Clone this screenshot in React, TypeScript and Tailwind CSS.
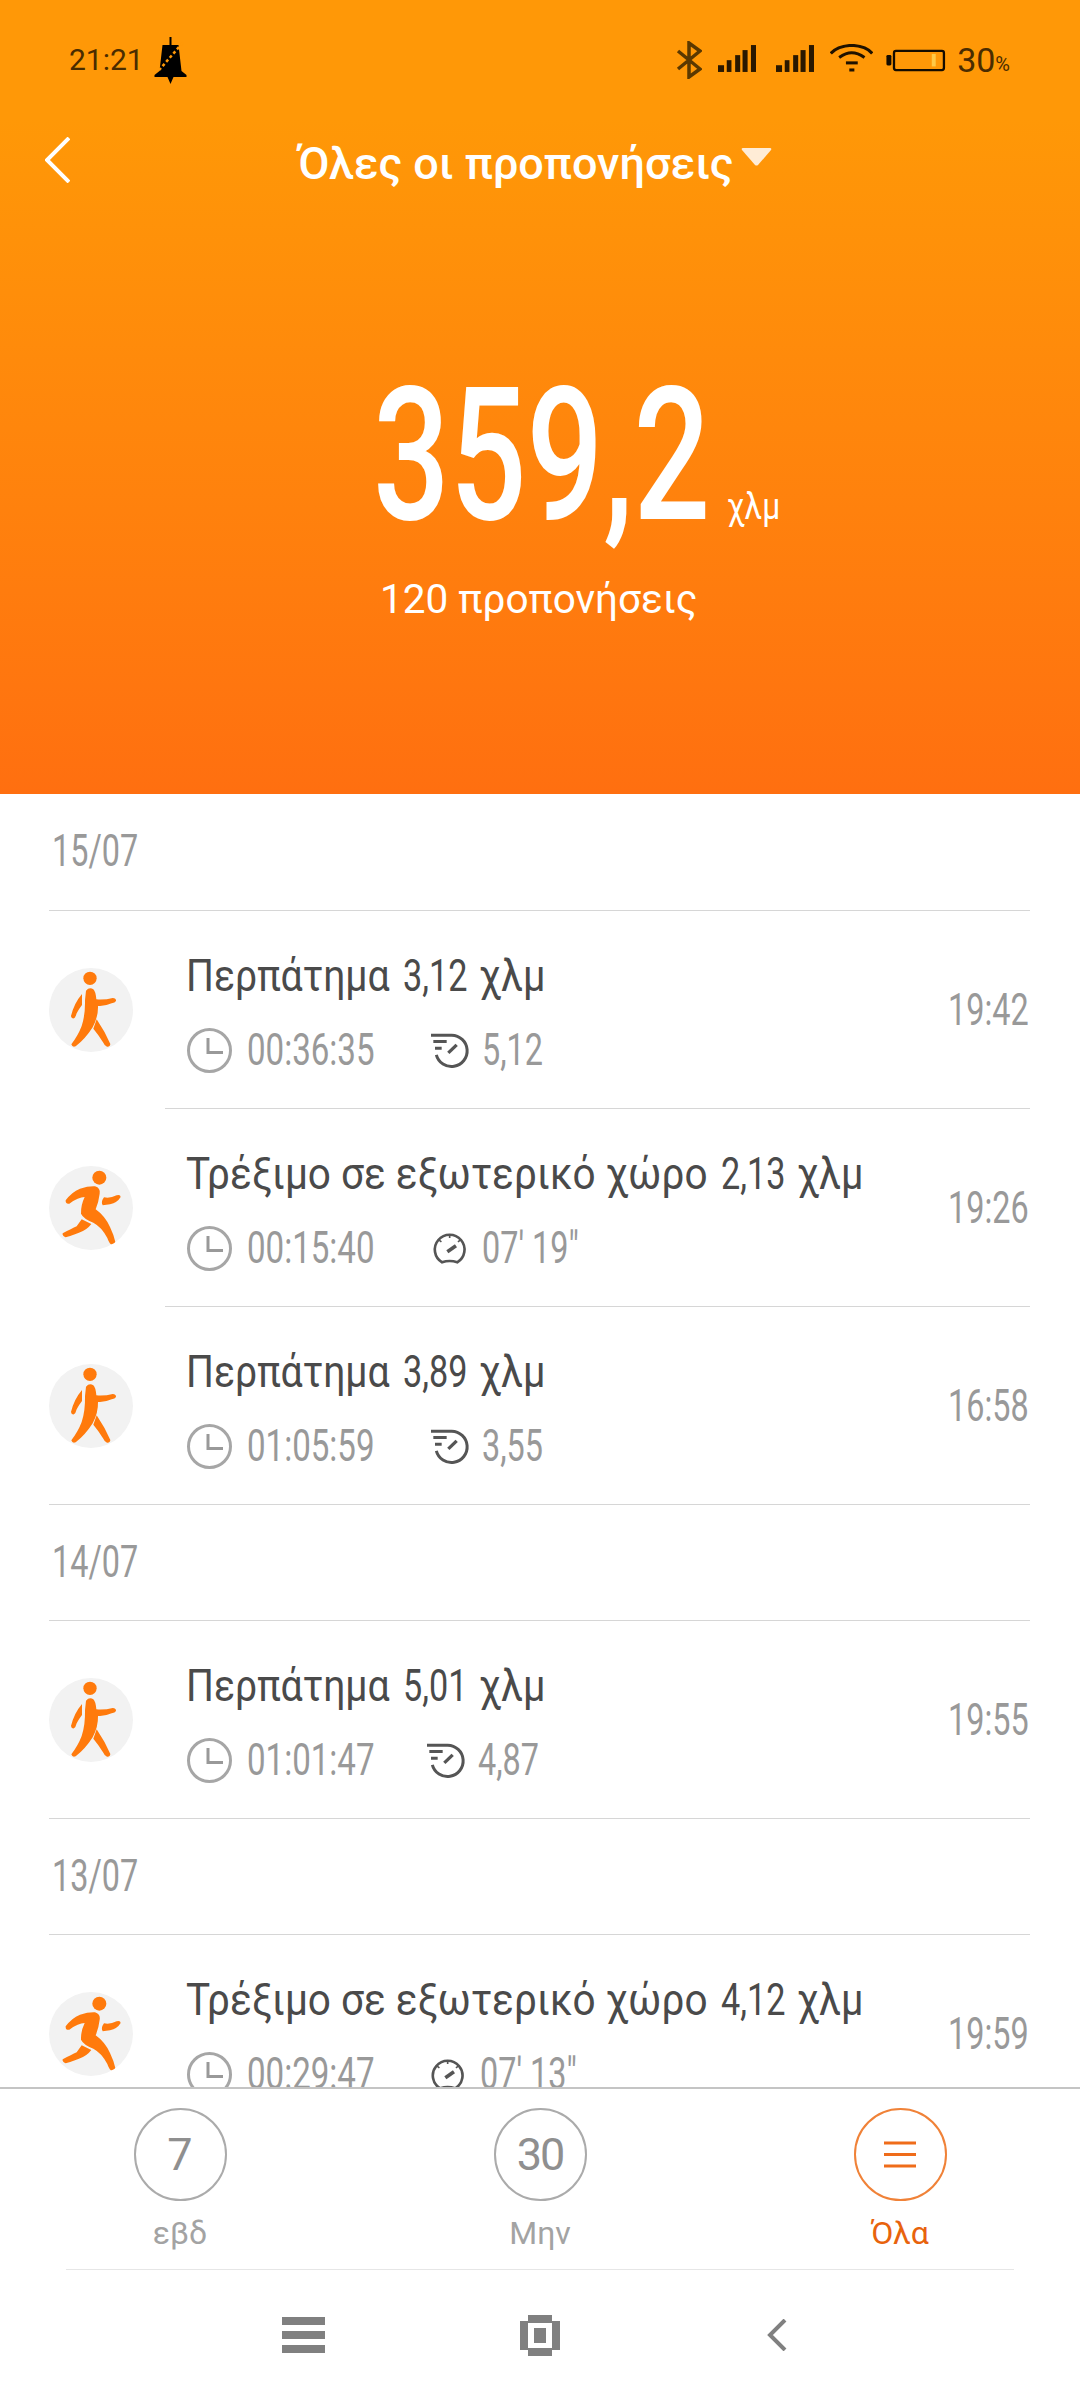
import React from "react";

const F = "[font-family:Roboto,'Noto_Sans',sans-serif]";

function Walker() {
  return (
    <svg viewBox="57 54 252 252" className="w-[84px] h-[84px] shrink-0 rounded-full bg-[#f2f2f2]">
      <g fill="#ff7a0c">
        <circle cx="180" cy="85" r="20" />
        <path d="M168 122Q178 110 190 118Q197 124 199 148Q225 150 248 144Q259 145 258 153Q255 158 245 160Q222 170 204 168Q205 200 188 232Q165 268 137 289Q127 293 124 283Q145 255 155 228Q166 195 165 150Z" />
        <path d="M156 132Q132 160 123 198Q124 207 132 205Q137 202 140 190Q148 175 156 165Z" />
        <path d="M200 208Q225 245 241 282Q240 291 231 290Q224 288 220 278Q206 255 190 236Z" />
      </g>
    </svg>
  );
}

function Runner() {
  return (
    <svg viewBox="57 62 252 252" className="w-[84px] h-[84px] shrink-0 rounded-full bg-[#f2f2f2]">
      <g fill="#ff7a0c">
        <circle cx="208" cy="97" r="21" />
        <path d="M107 165Q125 140 150 130Q175 122 195 123Q212 128 209 145Q206 170 197 192Q225 212 240 245Q252 270 256 290Q253 300 243 297Q237 293 232 278Q215 245 190 232Q160 220 153 205Q152 180 164 155Q145 155 118 175Q106 177 107 165Z" />
        <path d="M155 222L184 236Q170 255 145 263Q122 272 107 276Q96 272 98 264Q125 250 140 243Z" />
        <path d="M222 156Q240 160 260 150Q271 146 272 155Q262 172 240 177L218 180Q212 170 222 156Z" />
      </g>
    </svg>
  );
}

function Clock() {
  return (
    <svg viewBox="0 0 45 45" className="w-[45px] h-[45px] shrink-0" fill="none">
      <circle cx="22.5" cy="22.5" r="21" stroke="#a6a6a6" strokeWidth="3" />
      <path d="M21 10V24.5H36" stroke="#999999" strokeWidth="3" />
    </svg>
  );
}

function Pace() {
  return (
    <svg viewBox="780 62 120 110" className="w-[40px] h-[37px] shrink-0" fill="none" stroke="#555555" strokeWidth="9">
      <path d="M783 71H845A47 47 0 1 1 799 130" />
      <path d="M790 90H830M795 110H815" />
      <path d="M835 124L860 100" strokeWidth="10" />
    </svg>
  );
}

function Gauge() {
  return (
    <svg viewBox="790 48 108 100" className="w-[36px] h-[33px] shrink-0" fill="none" stroke="#555555" strokeWidth="8">
      <path d="M820 140A45 45 0 1 1 866 140Q843 132 820 140Z" />
      <path d="M843 54V66M810 72L818 78M876 72L868 78" strokeWidth="5" />
      <path d="M836 108L862 90" strokeWidth="11" />
    </svg>
  );
}

type Row = {
  run: boolean;
  name: string;
  dist: string;
  time: string;
  val: string;
  at: string;
  slot: string;
  last?: boolean;
};

function Activity({ r }: { r: Row }) {
  return (
    <div className={r.last ? "flex h-[198px] border-b border-[#d6d6d6]" : "flex h-[198px]"}>
      <div className="w-[116px] shrink-0 flex items-center">{r.run ? <Runner /> : <Walker />}</div>
      <div className={r.last ? "flex-1 flex items-center pl-[21px]" : "flex-1 flex items-center pl-[21px] border-b border-[#d6d6d6]"}>
        <div className="flex-1 flex flex-col pt-[7px]">
          <div className="flex items-center h-[46px] text-[#4a4a4a] text-[45px] leading-[46px] whitespace-nowrap mb-[28px]">
            <span className={r.run ? "inline-block w-[535px] origin-left scale-x-[.90]" : "inline-block w-[217px] origin-left scale-x-[.87]"}>{r.name}</span>
            <span className="inline-block w-[76px] origin-left scale-x-[.76]">{r.dist}</span>
            <span className="inline-block w-[66px] origin-left scale-x-[.88]">χλμ</span>
          </div>
          <div className="flex items-center h-[46px] pl-[1px] text-[#999999] text-[45px] whitespace-nowrap">
            <Clock />
            <span className={r.slot}>
              <span className="inline-block origin-left scale-x-[.735]">{r.time}</span>
            </span>
            {r.run ? <Gauge /> : <Pace />}
            <span className={r.run ? "inline-block ml-[14px] origin-left scale-x-[.72]" : "inline-block ml-[12px] origin-left scale-x-[.72]"}>{r.val}</span>
          </div>
        </div>
        <span className="inline-block w-[82px] text-[#999999] text-[45px] origin-left scale-x-[.72] whitespace-nowrap">{r.at}</span>
      </div>
    </div>
  );
}

function DateHead({ d, first }: { d: string; first?: boolean }) {
  return (
    <div className={first ? "h-[117px] flex items-center pl-[3px] pb-[2px] border-b border-[#d6d6d6] text-[#999999] text-[45px]" : "h-[116px] flex items-center pl-[3px] pb-[2px] border-b border-[#d6d6d6] text-[#999999] text-[45px]"}>
      <span className="inline-block origin-left scale-x-[.72]">{d}</span>
    </div>
  );
}

const g1: Row[] = [
  { run: false, name: "Περπάτημα", dist: "3,12", time: "00:36:35", val: "5,12", at: "19:42", slot: "w-[198px] pl-[15px] shrink-0" },
  { run: true, name: "Τρέξιμο σε εξωτερικό χώρο", dist: "2,13", time: "00:15:40", val: "07' 19\"", at: "19:26", slot: "w-[200px] pl-[15px] shrink-0" },
  { run: false, name: "Περπάτημα", dist: "3,89", time: "01:05:59", val: "3,55", at: "16:58", slot: "w-[198px] pl-[15px] shrink-0", last: true },
];
const g2: Row[] = [
  { run: false, name: "Περπάτημα", dist: "5,01", time: "01:01:47", val: "4,87", at: "19:55", slot: "w-[194px] pl-[15px] shrink-0", last: true },
];
const g3: Row[] = [
  { run: true, name: "Τρέξιμο σε εξωτερικό χώρο", dist: "4,12", time: "00:29:47", val: "07' 13\"", at: "19:59", slot: "w-[198px] pl-[15px] shrink-0" },
];

function StatusIcons() {
  const bars = (
    <svg viewBox="232 75 113 80" className="w-[38px] h-[27px]" fill="#2a1800">
      <rect x="232" y="135" width="18" height="20" />
      <rect x="258" y="120" width="14" height="35" />
      <rect x="283" y="105" width="15" height="50" />
      <rect x="305" y="90" width="15" height="65" />
      <rect x="330" y="75" width="15" height="80" />
    </svg>
  );
  return (
    <div className="flex items-center">
      <svg viewBox="0 0 26 38" className="w-[26px] h-[38px]" fill="none" stroke="#5a3800" strokeWidth="3.5">
        <path d="M2 10L24 28L13 36V2L24 10L2 28" />
      </svg>
      <div className="ml-[16px] mt-[-4px]">{bars}</div>
      <div className="ml-[20px] mt-[-4px]">{bars}</div>
      <svg viewBox="568 72 127 83" className="ml-[16px] mt-[-5px] w-[43px] h-[28px]" fill="none" stroke="#1f1200" strokeWidth="9">
        <path d="M570 100Q590 78 632 76Q675 78 693 100" />
        <path d="M595 112Q615 98 632 98Q650 98 670 112" />
        <path d="M615 128H650" />
        <path d="M625 149H640" />
      </svg>
      <svg viewBox="735 82 180 70" className="ml-[13px] w-[60px] h-[23px]" fill="none">
        <rect x="758" y="88" width="152" height="58" rx="6" stroke="#140c00" strokeWidth="7" />
        <rect x="735" y="100" width="15" height="32" rx="4" fill="#140c00" />
        <rect x="873" y="97" width="12" height="38" fill="#ffc947" />
      </svg>
      <span className="ml-[11px] text-[34px] leading-none text-[#4a2c00]">30</span>
      <span className="text-[20px] leading-none text-[#4a2c00] mt-[8px]">%</span>
    </div>
  );
}

function Tab({ label, active, children }: { label: string; active?: boolean; children: React.ReactNode }) {
  return (
    <div className="flex flex-col items-center">
      <div className={active ? "w-[93px] h-[93px] rounded-full border-2 border-[#f08238] flex items-center justify-center" : "w-[93px] h-[93px] rounded-full border-2 border-[#ababab] flex items-center justify-center"}>
        {children}
      </div>
      <span className={active ? "mt-[13px] text-[32px] leading-[38px] text-[#e8630d]" : "mt-[13px] text-[32px] leading-[38px] text-[#a3a3a3]"}>{label}</span>
    </div>
  );
}

export default function App() {
  return (
    <div className={`${F} w-[1080px] h-[2400px] flex flex-col overflow-hidden bg-white`}>
      <header className="h-[794px] shrink-0 bg-gradient-to-b from-[#ff9807] from-[15%] to-[#ff6f10] text-white">
        <div className="h-[80px] pt-[40px] pl-[69px] pr-[70px] flex items-center justify-between">
          <div className="flex items-center">
            <span className="text-[30px] leading-none text-[#4a2c00]">21:21</span>
            <svg viewBox="0 0 32 47" className="ml-[10px] w-[33px] h-[47px]">
              <path d="M15 0H17V8H15Z M8 8H24L27 34L32 38V40H0V38L5 34Z M13 40H19L16 47Z" fill="#000" />
              <path d="M28 6L3 35" stroke="#ff9807" strokeWidth="2.5" strokeDasharray="3 2.5" />
            </svg>
          </div>
          <StatusIcons />
        </div>
        <div className="h-[80px] mt-[40px] pl-[45px] flex items-center">
          <svg viewBox="0 0 25 46" className="w-[25px] h-[46px]" fill="none" stroke="#fff" strokeWidth="4">
            <path d="M24 1L2 23L24 45" />
          </svg>
          <span className="ml-[228px] mt-[8px] text-[45px] font-medium whitespace-nowrap">Όλες οι προπονήσεις</span>
          <svg viewBox="0 0 31 18" className="ml-[8px] mb-[6px] w-[31px] h-[18px]">
            <path d="M2 0H29Q31 0 30 2L17 17Q15.500 18 14 17L1 2Q0 0 2 0Z" fill="#ffecd6" />
          </svg>
        </div>
        <div className="mt-[161px] pl-[373px] flex items-baseline h-[190px] leading-[190px]">
          <span className="inline-block w-[354px] text-[185px] font-medium whitespace-nowrap origin-left scale-x-[.73]">359,2</span>
          <span className="inline-block text-[36px] leading-none origin-left scale-x-[.88]">χλμ</span>
        </div>
        <div className="mt-[25px] pl-[380px] text-[40.5px] leading-[46px]">120 προπονήσεις</div>
      </header>

      <main className="flex-1 min-h-0 overflow-hidden px-[49px] pr-[50px]">
        <DateHead d="15/07" first />
        {g1.map((r) => <Activity key={r.at} r={r} />)}
        <DateHead d="14/07" />
        {g2.map((r) => <Activity key={r.at} r={r} />)}
        <DateHead d="13/07" />
        {g3.map((r) => <Activity key={r.at} r={r} />)}
      </main>

      <footer className="shrink-0 h-[313px] border-t-2 border-[#c4c4c4] bg-white">
        <div className="mx-[66px] h-[181px] border-b border-[#e6e6e6]">
          <div className="mx-[-66px] pt-[19px] grid grid-cols-3">
            <Tab label="εβδ"><span className="text-[45px] text-[#8f8f8f] leading-none">7</span></Tab>
            <Tab label="Μην"><span className="text-[45px] text-[#8f8f8f] leading-none tracking-[-2px]">30</span></Tab>
            <Tab label="Όλα" active>
              <svg viewBox="0 0 32 27" className="w-[32px] h-[27px]" stroke="#ef6c1a" strokeWidth="3">
                <path d="M0 2H32M0 13.500H32M0 25H32" />
              </svg>
            </Tab>
          </div>
        </div>
        <div className="h-[130px] flex items-center justify-center pr-[12px]">
          <svg viewBox="0 0 43 36" className="w-[43px] h-[36px]" fill="#808080">
            <rect width="43" height="8" />
            <rect y="14" width="43" height="8" />
            <rect y="28" width="43" height="8" />
          </svg>
          <svg viewBox="0 0 40 41" className="ml-[195px] w-[40px] h-[41px]" fill="#808080">
            <path d="M8 0H32V6H40V35H32V41H8V35H0V6H8ZM8 8V33H32V8Z" fillRule="evenodd" />
            <rect x="14" y="13" width="12" height="15" />
          </svg>
          <svg viewBox="0 0 20 32" className="ml-[207px] w-[20px] h-[32px]" fill="none" stroke="#808080" strokeWidth="4">
            <path d="M18 1L3 16L18 31" />
          </svg>
        </div>
      </footer>
    </div>
  );
}
